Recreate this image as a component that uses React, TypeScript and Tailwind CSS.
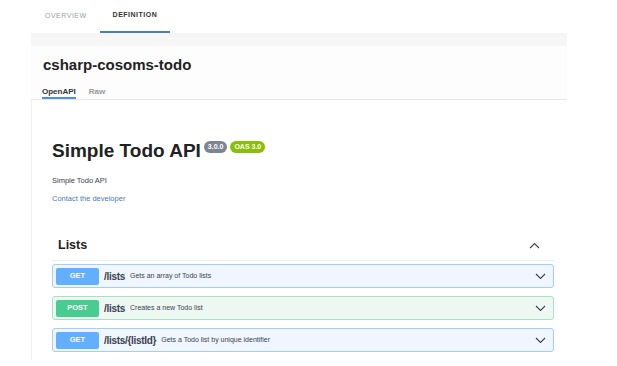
import React from 'react';

const ops = [
  { method: 'GET', path: '/lists', desc: 'Gets an array of Todo lists' },
  { method: 'POST', path: '/lists', desc: 'Creates a new Todo list' },
  { method: 'GET', path: '/lists/{listId}', desc: 'Gets a Todo list by unique identifier' },
];

function Chevron({ up = false }: { up?: boolean }) {
  return (
    <svg width="11" height="7" viewBox="0 0 11 7" fill="none" className={up ? 'rotate-180' : ''}>
      <path d="M1 1l4.5 4.5L10 1" stroke="#3b4151" strokeWidth="1.1" />
    </svg>
  );
}

export default function App() {
  return (
    <div className="w-[617px] h-[366px] bg-white overflow-hidden text-[#3b4151]" style={{ fontFamily: '"Liberation Sans", Arial, sans-serif' }}>
      {/* top tabs */}
      <div className="flex h-[33px] pl-[32px]">
        <div className="px-[13px] flex items-center text-[7px] tracking-[0.5px] text-[#9aa0a6]">OVERVIEW</div>
        <div className="px-[13px] flex items-center text-[7px] tracking-[0.5px] font-bold text-[#333] border-b-2 border-[#4a7cc2]">DEFINITION</div>
      </div>

      <div className="ml-[31px] w-[536px]">
        <div className="h-[13px] bg-[#f6f6f6]" />
        <div className="bg-[#fdfdfd] border-b border-[#e6e6e6]">
          <div className="pl-[12px] pt-[10px] text-[15px] font-bold text-[#222] leading-[18px]">csharp-cosoms-todo</div>
          <div className="flex gap-[13px] pl-[11px] mt-[13px] text-[8px] font-bold">
            <div className="border-b-2 border-[#4a90e2] text-[#333] leading-[10px]">OpenAPI</div>
            <div className="text-[#999] leading-[10px]">Raw</div>
          </div>
        </div>

        <div className="border-l border-[#f0f0f0] h-[260px] pl-[20px] pr-[13px]">
          <div className="flex items-start pt-[39px]">
            <div className="text-[19px] font-bold leading-[24px] text-[#222]">Simple Todo API</div>
            <div className="flex gap-[3px] mt-[2px] ml-[3px]">
              <span className="bg-[#7d8492] text-white text-[7px] font-bold rounded-full px-[4px] h-[12px] leading-[12px]">3.0.0</span>
              <span className="bg-[#89bf04] text-white text-[7px] font-bold rounded-full px-[4px] h-[12px] leading-[12px]">OAS 3.0</span>
            </div>
          </div>
          <div className="mt-[13px] text-[7.5px] leading-[10px] text-[#3b4151]">Simple Todo API</div>
          <div className="mt-[8px] text-[7.5px] leading-[10px] text-[#4a7cc2]">Contact the developer</div>

          <div className="mt-[27px] flex items-center justify-between border-b border-[#ececec] h-[30px] pl-[6px] pr-[14px]">
            <div className="text-[12.5px] font-bold text-[#222]">Lists</div>
            <Chevron up />
          </div>

          <div className="flex flex-col gap-[8px] mt-[3px]">
            {ops.map((op, i) => {
              const get = op.method === 'GET';
              return (
                <div
                  key={i}
                  className={`flex items-center h-[24px] rounded-[3px] border pl-[3px] pr-[7px] ${get ? 'bg-[#eff6ff] border-[#a4cdfc]' : 'bg-[#eef8f3] border-[#a8e0c4]'}`}
                >
                  <div className={`w-[43px] h-[17px] rounded-[2px] flex items-center justify-center text-white text-[7.5px] font-bold ${get ? 'bg-[#61affe]' : 'bg-[#49cc90]'}`}>
                    {op.method}
                  </div>
                  <div className="ml-[5px] text-[10px] font-bold text-[#3b4151] tracking-[-0.3px]">{op.path}</div>
                  <div className="ml-[5px] text-[7px] text-[#3b4151]">{op.desc}</div>
                  <div className="ml-auto">
                    <Chevron />
                  </div>
                </div>
              );
            })}
          </div>
        </div>
      </div>
    </div>
  );
}
